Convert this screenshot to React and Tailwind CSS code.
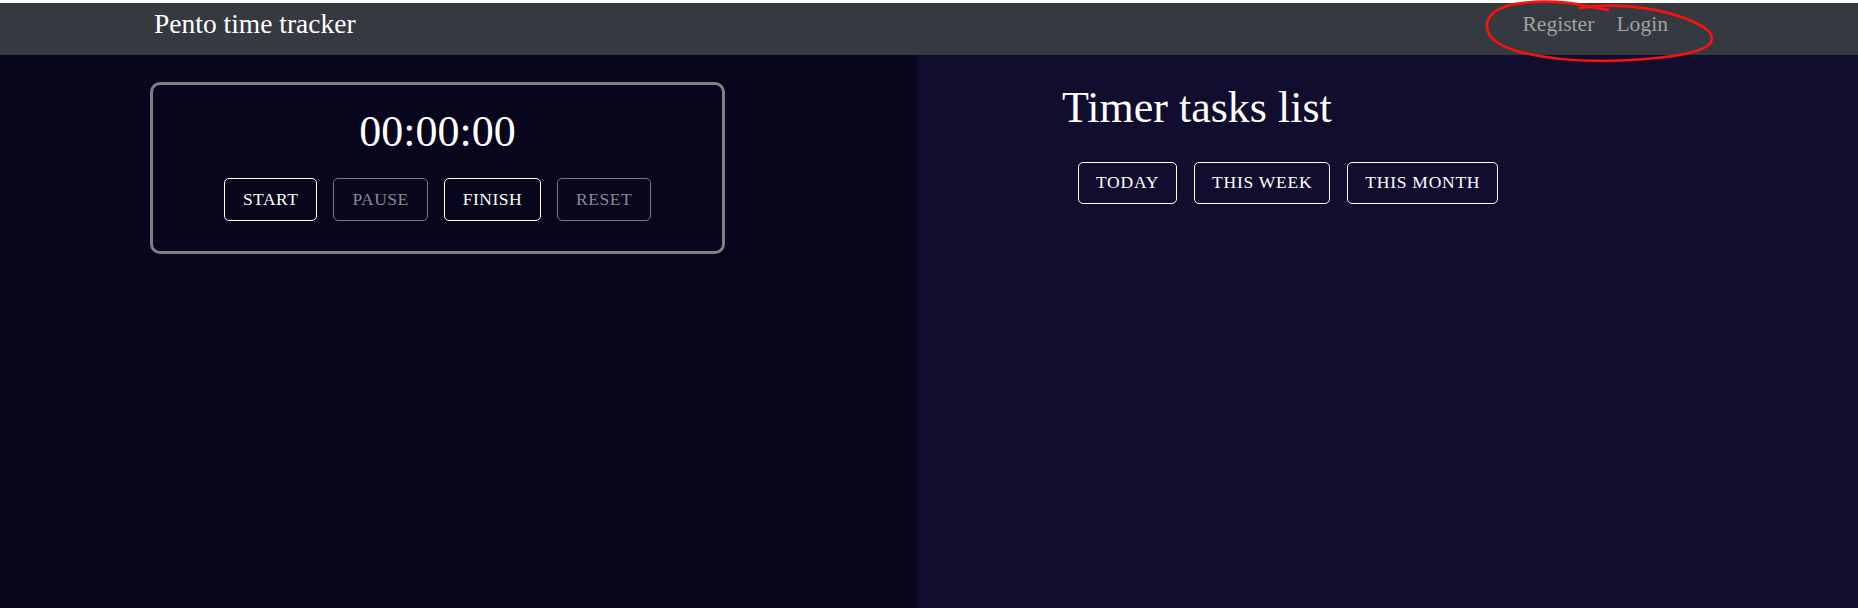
import React from "react";

const serif = { fontFamily: '"Liberation Serif", "Times New Roman", serif' };

function Btn({ children, disabled, h = "h-[43px]", pad = "px-[18px] tracking-[0.5px]" }) {
  return (
    <button
      className={`${h} ${pad} flex items-center rounded-[5px] border text-[17.5px] uppercase leading-none ${
        disabled ? "border-[#77777f] text-[#8a8a8e]" : "border-white text-white"
      }`}
      style={serif}
    >
      {children}
    </button>
  );
}

export default function App() {
  const rpad = "px-[17px] tracking-[0.75px]";
  return (
    <div className="relative h-screen w-full flex flex-col overflow-hidden" style={serif}>
      <div className="h-[3px] bg-white shrink-0" />
      <nav className="h-[52px] shrink-0 bg-[#343a40] flex items-start justify-between pl-[154px] pr-[190px]">
        <span className="mt-[5px] text-[27.5px] leading-[32px] text-white">Pento time tracker</span>
        <div className="mt-[8px] flex gap-[22px] text-[21.6px] leading-[26px] text-[#a0a2a5]">
          <span>Register</span>
          <span>Login</span>
        </div>
      </nav>
      <div className="flex flex-1">
        <section className="w-[917px] shrink-0 bg-[#08061c] pt-[27px] pl-[150px]">
          <div className="w-[575px] h-[172px] rounded-[10px] border-[3px] border-[#808080] pt-[21px] flex flex-col items-center">
            <div className="text-[44px] leading-[52px] text-white">00:00:00</div>
            <div className="mt-[20px] flex gap-[16px]">
              <Btn>Start</Btn>
              <Btn disabled>Pause</Btn>
              <Btn>Finish</Btn>
              <Btn disabled>Reset</Btn>
            </div>
          </div>
        </section>
        <section className="flex-1 bg-[#110d2f] pt-[27px] pl-[145px]">
          <h1 className="text-[44px] leading-[52px] text-white">Timer tasks list</h1>
          <div className="mt-[28px] ml-[16px] flex gap-[17px]">
            <Btn h="h-[42px]" pad={rpad}>Today</Btn>
            <Btn h="h-[42px]" pad={rpad}>This week</Btn>
            <Btn h="h-[42px]" pad={rpad}>This month</Btn>
          </div>
        </section>
      </div>
      <svg
        className="absolute left-[1480px] top-0 pointer-events-none"
        width="240"
        height="66"
        viewBox="0 0 240 66"
        fill="none"
      >
        <path
          d="M100,8 C130,3 172,6 204,18 C226,26 235,34 231,42 C225,53 190,58 140,60.5 C100,62 64,58 40,52 C20,46 9,40 7,28 C6,18 12,10 30,5 C55,0 85,1 112,7 C118,8 124,9 128,10"
          stroke="#ff1010"
          strokeWidth="2.6"
          strokeLinecap="round"
          strokeLinejoin="round"
        />
      </svg>
    </div>
  );
}
